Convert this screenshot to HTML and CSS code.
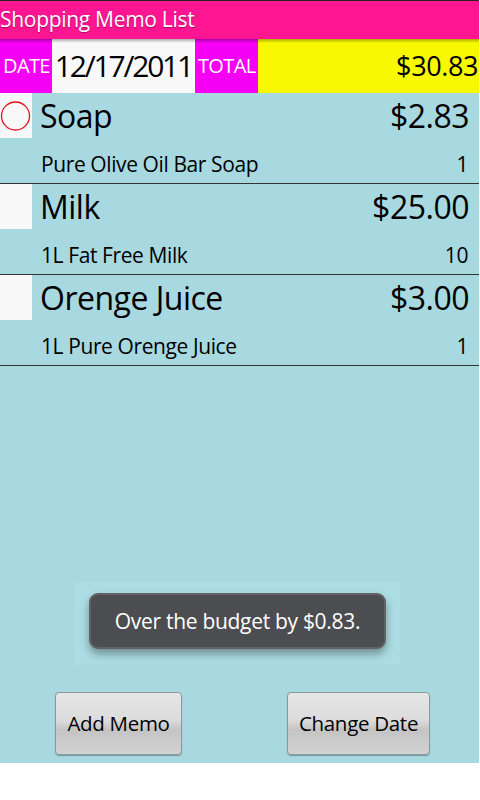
FILE: index.html
```html
<!DOCTYPE html>
<html>

  <head>
    <title>Shopping Memo List</title>
    <link rel="stylesheet" href="styles.css">
  </head>

  <body>
    <div id="app">
      <header class="title-bar">Shopping Memo List</header>

      <div class="summary">
        <span class="tag">DATE</span>
        <span class="date">12/17/2011</span>
        <span class="tag">TOTAL</span>
        <span class="total">$30.83</span>
      </div>

      <ul class="memo-list">
        <li class="memo">
          <div class="memo-top">
            <span class="check">
              <svg width="32" height="45" viewBox="0 0 32 45">
                <circle cx="15.5" cy="23" r="14" fill="none" stroke="#e8101a" stroke-width="1.3" />
              </svg>
            </span>
            <span class="name">Soap</span>
            <span class="price">$2.83</span>
          </div>
          <div class="memo-sub">
            <span>Pure Olive Oil Bar Soap</span>
            <span>1</span>
          </div>
        </li>
        <li class="memo">
          <div class="memo-top">
            <span class="check"></span>
            <span class="name">Milk</span>
            <span class="price">$25.00</span>
          </div>
          <div class="memo-sub">
            <span>1L Fat Free Milk</span>
            <span>10</span>
          </div>
        </li>
        <li class="memo">
          <div class="memo-top">
            <span class="check"></span>
            <span class="name">Orenge Juice</span>
            <span class="price">$3.00</span>
          </div>
          <div class="memo-sub">
            <span>1L Pure Orenge Juice</span>
            <span>1</span>
          </div>
        </li>
      </ul>

      <div class="toast-wrap">
        <div class="toast">Over the budget by $0.83.</div>
      </div>

      <div class="actions">
        <button class="add">Add Memo</button>
        <button class="change">Change Date</button>
      </div>
    </div>
  </body>

</html>
```

FILE: styles.css
```css
body {
  margin: 0;
  background-color: #fff;
  font-family: "Open Sans", "Noto Sans", sans-serif;
}

#app {
  position: relative;
  width: 479px;
  height: 763px;
  background-color: #a8d9e0;
  display: flex;
  flex-direction: column;
}

.title-bar {
  height: 38px;
  border-top: 1px solid #222;
  background-color: #fd1591;
  color: #fff;
  font-size: 21px;
  line-height: 36px;
  padding-left: 0;
  letter-spacing: -0.3px;
  text-shadow: 0 1px 1px rgba(0, 0, 0, 0.35);
}

.summary {
  display: flex;
  height: 54px;
  position: relative;
}

.summary::before {
  content: "";
  position: absolute;
  left: 0;
  right: 0;
  top: 0;
  height: 4px;
  background: linear-gradient(rgba(0, 0, 0, 0.3), rgba(0, 0, 0, 0));
}

.tag {
  background-color: #f500f5;
  color: #fff;
  font-size: 20px;
  line-height: 54px;
  letter-spacing: -0.6px;
  padding: 0 2px 0 3px;
}

.date {
  width: 143px;
  background-color: #f8f8f8;
  color: #000;
  font-size: 30px;
  line-height: 54px;
  text-align: center;
  letter-spacing: -2.2px;
}

.total {
  flex: 1;
  background-color: #f8f800;
  color: #000;
  font-size: 27px;
  line-height: 54px;
  text-align: right;
  padding-right: 1px;
  letter-spacing: -0.4px;
}

.memo-list {
  list-style: none;
  margin: 0;
  padding: 0;
}

.memo {
  height: 90px;
  border-bottom: 1px solid #333;
}

.memo-top {
  display: flex;
  align-items: center;
  height: 45px;
}

.check {
  width: 32px;
  height: 45px;
  background-color: #f8f8f8;
  margin-right: 8px;
}

.check svg {
  display: block;
}

.name {
  flex: 1;
  font-size: 32px;
  letter-spacing: -0.5px;
  color: #000;
}

.price {
  font-size: 32px;
  letter-spacing: -0.5px;
  padding-right: 10px;
}

.memo-sub {
  display: flex;
  justify-content: space-between;
  align-items: center;
  height: 39px;
  padding: 6px 11px 0 41px;
  font-size: 21px;
  letter-spacing: -0.4px;
}

.toast-wrap {
  position: absolute;
  left: 75px;
  top: 582px;
  width: 325px;
  height: 83px;
  background-color: #addde4;
  display: flex;
  align-items: center;
  justify-content: center;
}

.toast {
  width: 293px;
  height: 52px;
  margin-top: -6px;
  background-color: #4c4d50;
  border: 2px solid #616265;
  border-radius: 9px;
  box-shadow: 0 5px 8px rgba(0, 0, 0, 0.35);
  color: #fff;
  font-size: 21px;
  line-height: 52px;
  text-align: center;
  letter-spacing: -0.3px;
}

.actions {
  margin-top: auto;
  display: flex;
  padding: 0 0 8px 55px;
}

button {
  height: 63px;
  border: 1px solid #8a9a9c;
  border-radius: 4px;
  background: linear-gradient(#e6e6e6, #dcdcdc 45%, #c4c4c4 60%, #d2d2d2);
  box-shadow: 0 1px 1px rgba(0, 0, 0, 0.3);
  color: #000;
  font-family: "Open Sans", "Noto Sans", sans-serif;
  font-size: 20.5px;
  letter-spacing: -0.3px;
  padding: 0 0 2px;
}

.add {
  width: 127px;
}

.change {
  width: 143px;
  margin-left: 105px;
}
```
